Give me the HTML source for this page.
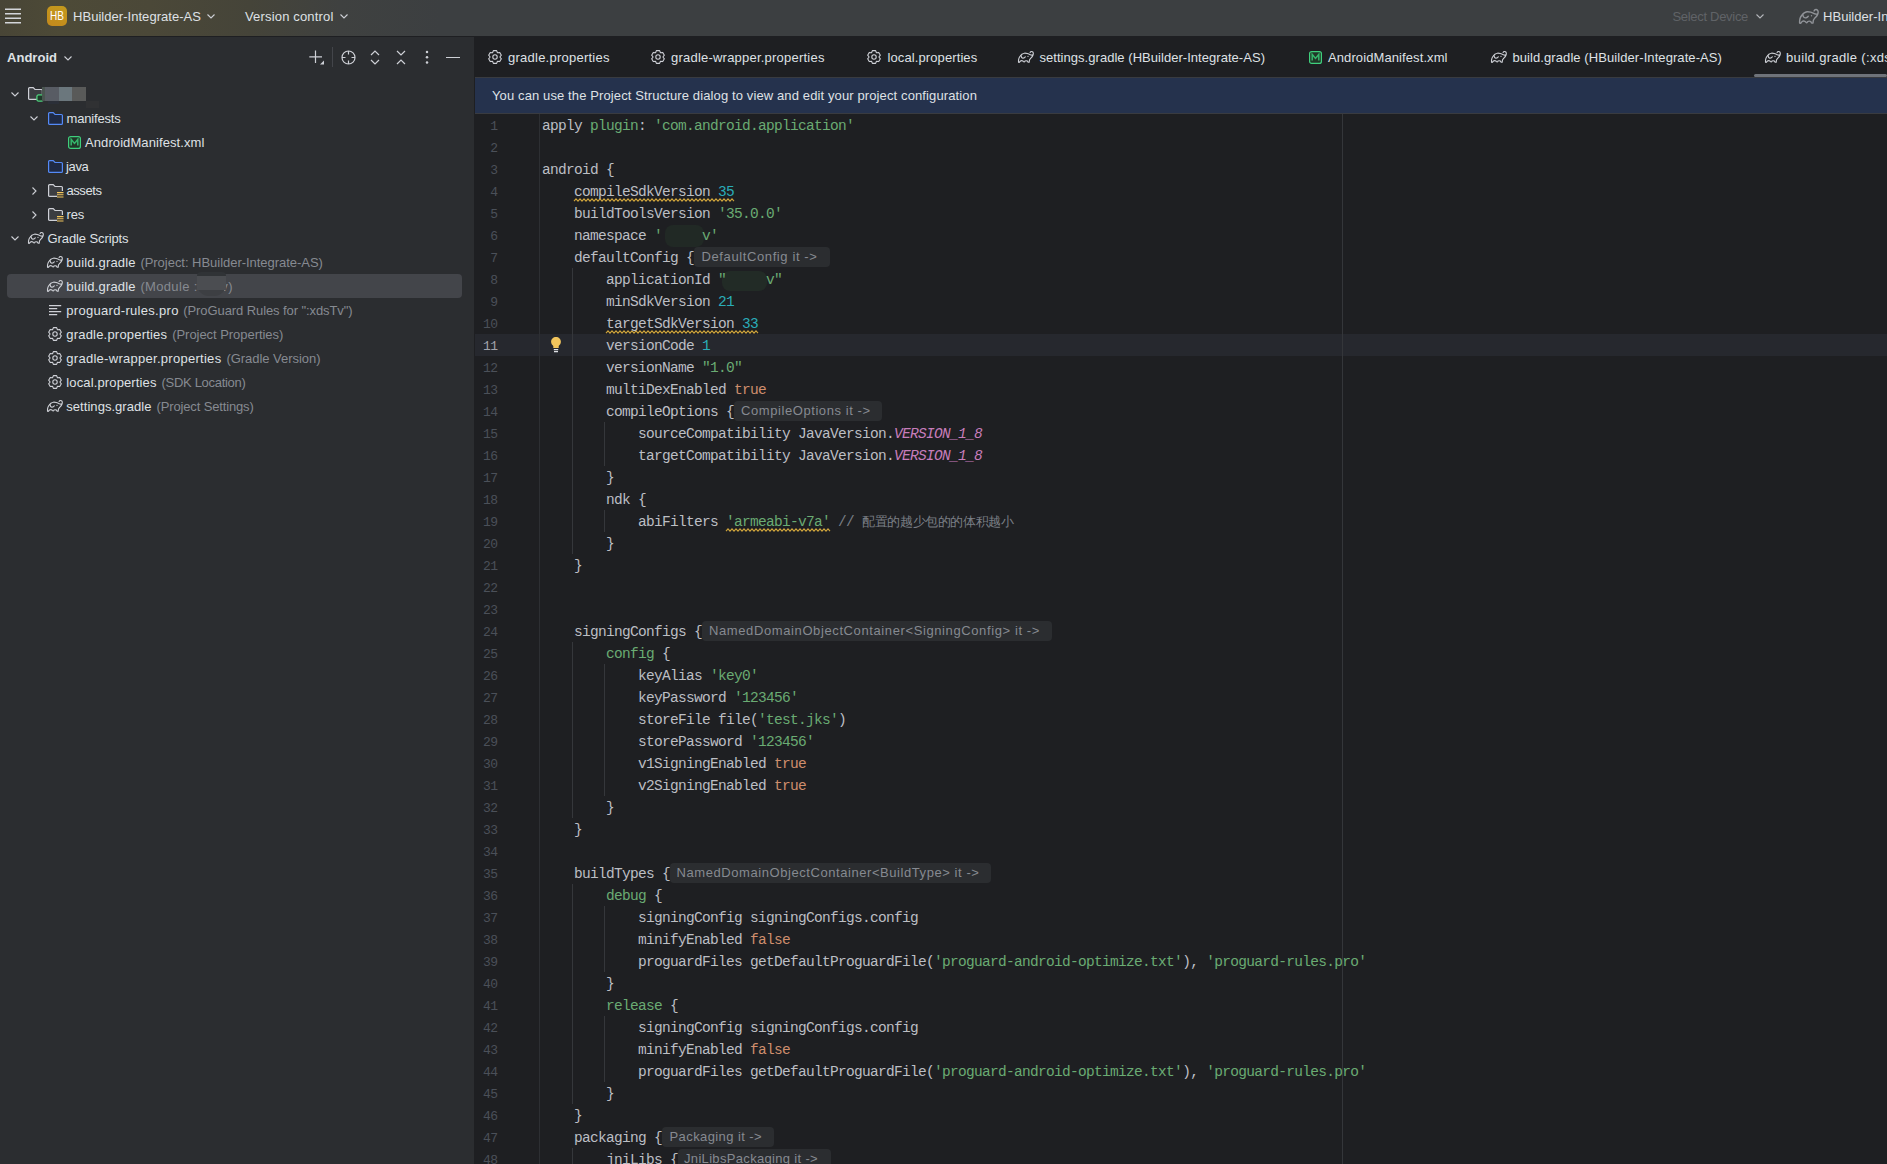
<!DOCTYPE html><html><head><meta charset="utf-8"><style>
*{margin:0;padding:0;box-sizing:border-box}
html,body{width:1887px;height:1164px;overflow:hidden;background:#1e1f22;font-family:"Liberation Sans", sans-serif;}
.abs{position:absolute}
svg{position:absolute;overflow:visible}
#title{left:0;top:0;width:1887px;height:37px;border-bottom:1px solid #1e1f22;background:linear-gradient(90deg,#484536 0px,#4d4a37 60px,#4b4838 150px,#454439 250px,#3f4140 340px,#3c3f41 440px,#3c3f41 100%);}
#side{left:0;top:37px;width:474px;height:1127px;background:#2b2d30;}
#tabs{left:474px;top:37px;width:1413px;height:40px;background:#1e1f22;}
#banner{left:475px;top:77px;width:1412px;height:37px;background:#25324d;border-top:1px solid #393b40;border-bottom:1px solid #393b40;}
#code{left:474px;top:114px;width:1413px;height:1050px;background:#1e1f22;}
.t{position:absolute;white-space:pre;font-size:13px;color:#dfe1e5;line-height:16px;}
.ln{position:absolute;width:23.5px;text-align:right;font-family:"Liberation Mono", monospace;font-size:13px;letter-spacing:-0.5px;color:#4b5059;line-height:22px;}
.cl{position:absolute;white-space:pre;font-family:"Liberation Mono", monospace;font-size:14.5px;letter-spacing:-0.7px;color:#bcbec4;line-height:22px;height:22px;}
.s{color:#6aab73} .n{color:#2aacb8} .k{color:#cf8e6d} .p{color:#c77dbb;font-style:italic}
.cm{color:#7a7e85}
.hint{display:inline-block;vertical-align:top;margin-top:3px;height:20px;line-height:20px;padding:0 0 0 7px;border-radius:4px;background:#2b2d30;color:#868a91;font-family:"Liberation Sans", sans-serif;font-size:13px;}
.guide{position:absolute;width:1px;background:#313438;}
</style></head><body>
<div id="title" class="abs"></div><svg style="left:5px;top:8px" width="17" height="16" viewBox="0 0 17 16"><path d="M0 1.2H16M0 5.7H16M0 10.2H16M0 14.7H16" stroke="#d4d6da" stroke-width="1.4"/></svg><div class="abs" style="left:47px;top:6px;width:20px;height:20px;border-radius:5px;background:linear-gradient(200deg,#c39a1d,#c4891c);"></div><div class="t" style="left:50px;top:8.26px;font-size:12.8px;color:#ffffff;font-weight:normal;letter-spacing:0.000px;transform:scaleX(0.78);transform-origin:0 0;">HB</div><div class="t" style="left:73px;top:8.80px;font-size:13px;color:#dfe1e5;font-weight:normal;letter-spacing:0.040px;">HBuilder-Integrate-AS</div><svg style="left:207px;top:14px" width="8" height="5" viewBox="0 0 8 5"><path d="M0.5 0.5L4 4L7.5 0.5" fill="none" stroke="#ced0d6" stroke-width="1.1"/></svg><div class="t" style="left:245px;top:8.80px;font-size:13px;color:#dfe1e5;font-weight:normal;letter-spacing:0.167px;">Version control</div><svg style="left:340px;top:14px" width="8" height="5" viewBox="0 0 8 5"><path d="M0.5 0.5L4 4L7.5 0.5" fill="none" stroke="#ced0d6" stroke-width="1.1"/></svg><div class="t" style="left:1672.5px;top:8.80px;font-size:13px;color:#606367;font-weight:normal;letter-spacing:-0.306px;">Select Device</div><svg style="left:1756px;top:14px" width="8" height="5" viewBox="0 0 8 5"><path d="M0.5 0.5L4 4L7.5 0.5" fill="none" stroke="#b4b6ba" stroke-width="1.1"/></svg><svg style="left:1799px;top:8.5px" width="20.0" height="15.0" viewBox="0 0 16 12"><path d="M12.10 1.50C12.20 1.37 12.45 0.88 12.70 0.70C12.95 0.52 13.25 0.40 13.60 0.45C13.95 0.50 14.52 0.71 14.80 1.00C15.08 1.29 15.25 1.73 15.30 2.20C15.35 2.67 15.28 3.23 15.10 3.80C14.92 4.37 14.62 5.02 14.20 5.60C13.78 6.18 13.03 6.77 12.60 7.30C12.17 7.83 11.82 8.28 11.60 8.80C11.38 9.32 11.37 10.00 11.30 10.40C11.23 10.80 11.22 11.07 11.20 11.20 M11.20 11.20C11.02 11.20 10.42 11.40 10.10 11.20C9.78 11.00 9.62 10.25 9.30 10.00C8.98 9.75 8.57 9.70 8.20 9.70C7.83 9.70 7.45 9.77 7.10 10.00C6.75 10.23 6.47 11.10 6.10 11.10C5.73 11.10 5.30 10.25 4.90 10.00C4.50 9.75 4.10 9.60 3.70 9.60C3.30 9.60 2.88 9.72 2.50 10.00C2.12 10.28 1.73 11.10 1.40 11.30C1.07 11.50 0.65 11.22 0.50 11.20 M0.50 11.20C0.51 10.87 0.45 9.92 0.55 9.20C0.65 8.48 0.81 7.60 1.10 6.90C1.39 6.20 1.83 5.60 2.30 5.00C2.77 4.40 3.22 3.77 3.90 3.30C4.58 2.83 5.50 2.33 6.40 2.20C7.30 2.07 8.43 2.30 9.30 2.50C10.17 2.70 10.88 3.13 11.60 3.40C12.32 3.67 13.03 4.03 13.60 4.10C14.17 4.17 14.77 3.85 15.00 3.80" fill="none" stroke="#909398" stroke-width="1.15" stroke-linejoin="round" stroke-linecap="round"/><path d="M3.00 4.50C3.10 4.80 3.27 5.87 3.60 6.30C3.93 6.73 4.53 7.03 5.00 7.10C5.47 7.17 6.00 6.92 6.40 6.70C6.80 6.48 7.23 5.95 7.40 5.80" fill="none" stroke="#909398" stroke-width="1.15" stroke-linecap="round"/><circle cx="10" cy="5.4" r="0.55" fill="#909398"/></svg><div class="t" style="left:1823px;top:8.80px;font-size:13px;color:#dfe1e5;font-weight:normal;letter-spacing:0.040px;">HBuilder-Integrate-AS</div><div id="side" class="abs"></div><div class="t" style="left:7px;top:49.50px;font-size:13px;color:#dfe1e5;font-weight:bold;letter-spacing:0.025px;">Android</div><svg style="left:64px;top:56px" width="8" height="5" viewBox="0 0 8 5"><path d="M0.5 0.5L4 4L7.5 0.5" fill="none" stroke="#ced0d6" stroke-width="1.1"/></svg><svg style="left:309px;top:50px" width="16" height="15" viewBox="0 0 16 15"><path d="M6.5 0.5V13M0.3 6.8H13" stroke="#ced0d6" stroke-width="1.2"/><path d="M15 10.5V14.5H11Z" fill="#ced0d6"/></svg><div class="abs" style="left:332px;top:47px;width:1px;height:20px;background:#43454a"></div><svg style="left:341px;top:50px" width="15" height="15" viewBox="0 0 15 15"><circle cx="7.5" cy="7.5" r="6.5" fill="none" stroke="#ced0d6" stroke-width="1.2"/><path d="M7.5 1V4.5M7.5 10.5V14M1 7.5H4.5M10.5 7.5H14" stroke="#ced0d6" stroke-width="1.2"/></svg><svg style="left:370px;top:50px" width="10" height="15" viewBox="0 0 10 15"><path d="M1 5L5 1L9 5M1 10L5 14L9 10" fill="none" stroke="#ced0d6" stroke-width="1.2"/></svg><svg style="left:396px;top:50px" width="10" height="15" viewBox="0 0 10 15"><path d="M1 1L5 5L9 1M1 14L5 10L9 14" fill="none" stroke="#ced0d6" stroke-width="1.2"/></svg><svg style="left:425px;top:50px" width="4" height="15" viewBox="0 0 4 15"><circle cx="2" cy="2" r="1.25" fill="#ced0d6"/><circle cx="2" cy="7.2" r="1.25" fill="#ced0d6"/><circle cx="2" cy="12.4" r="1.25" fill="#ced0d6"/></svg><div class="abs" style="left:446px;top:56.5px;width:14px;height:1.3px;background:#ced0d6"></div><svg style="left:11px;top:92px" width="8" height="5" viewBox="0 0 8 5"><path d="M0.5 0.5L4 4L7.5 0.5" fill="none" stroke="#ced0d6" stroke-width="1.1"/></svg><svg style="left:28px;top:87px" width="15" height="13" viewBox="0 0 15 13"><path d="M9 12.4H1.6Q0.6 12.4 0.6 11.4V1.6Q0.6 0.6 1.6 0.6H5.2L7 2.5H13.4Q14.4 2.5 14.4 3.5V7" fill="#3b3d41" stroke="#ced0d6" stroke-width="1.2"/></svg><svg style="left:36px;top:94px" width="8" height="8" viewBox="0 0 8 8"><rect x="0.9" y="0.9" width="6.2" height="6.2" rx="1.6" fill="#1f3b2a" stroke="#4fd17d" stroke-width="1.3"/></svg><div class="abs" style="left:42px;top:87px;width:3px;height:14px;background:#4a5550"></div><div class="abs" style="left:45px;top:87px;width:14px;height:14px;background:#585c64"></div><div class="abs" style="left:59px;top:87px;width:13px;height:14px;background:#6b777d"></div><div class="abs" style="left:72px;top:87px;width:14px;height:14px;background:#595a59"></div><div class="abs" style="left:86px;top:101px;width:13px;height:7px;background:#303133"></div><div class="abs" style="left:48px;top:101px;width:11px;height:3px;background:#2b2f38"></div><svg style="left:30px;top:116px" width="8" height="5" viewBox="0 0 8 5"><path d="M0.5 0.5L4 4L7.5 0.5" fill="none" stroke="#ced0d6" stroke-width="1.1"/></svg><svg style="left:47.5px;top:111.5px" width="15" height="13" viewBox="0 0 15 13"><path d="M1.6 0.6H5.2L7 2.5H13.4Q14.4 2.5 14.4 3.5V11.4Q14.4 12.4 13.4 12.4H1.6Q0.6 12.4 0.6 11.4V1.6Q0.6 0.6 1.6 0.6Z" fill="#1f2a44" stroke="#548af7" stroke-width="1.2"/></svg><div class="t" style="left:66.5px;top:110.50px;font-size:13px;color:#dfe1e5;font-weight:normal;letter-spacing:-0.181px;">manifests</div><svg style="left:67.5px;top:135.5px" width="13" height="13" viewBox="0 0 13 13"><rect x="0.6" y="0.6" width="11.8" height="11.8" rx="2" fill="#213628" stroke="#3fcf7c" stroke-width="1.2"/><path d="M3.2 9.6V3.4L6.5 7.4L9.8 3.4V9.6" fill="none" stroke="#35b56b" stroke-width="1.5"/></svg><div class="t" style="left:85px;top:134.50px;font-size:13px;color:#dfe1e5;font-weight:normal;letter-spacing:0.091px;">AndroidManifest.xml</div><svg style="left:47.5px;top:159.5px" width="15" height="13" viewBox="0 0 15 13"><path d="M1.6 0.6H5.2L7 2.5H13.4Q14.4 2.5 14.4 3.5V11.4Q14.4 12.4 13.4 12.4H1.6Q0.6 12.4 0.6 11.4V1.6Q0.6 0.6 1.6 0.6Z" fill="#1f2a44" stroke="#548af7" stroke-width="1.2"/></svg><div class="t" style="left:66px;top:158.50px;font-size:13px;color:#dfe1e5;font-weight:normal;letter-spacing:-0.362px;">java</div><svg style="left:31.5px;top:186.5px" width="5" height="8" viewBox="0 0 5 8"><path d="M0.5 0.5L4 4L0.5 7.5" fill="none" stroke="#ced0d6" stroke-width="1.1"/></svg><svg style="left:47.5px;top:183.5px" width="15" height="13" viewBox="0 0 15 13"><path d="M9 12.4H1.6Q0.6 12.4 0.6 11.4V1.6Q0.6 0.6 1.6 0.6H5.2L7 2.5H13.4Q14.4 2.5 14.4 3.5V7" fill="#3b3d41" stroke="#ced0d6" stroke-width="1.2"/></svg><svg style="left:56.5px;top:191.5px" width="7" height="6" viewBox="0 0 7 6"><path d="M0 0.6H6.5M0 2.8H6.5M0 5H6.5" stroke="#f2c55c" stroke-width="1.1"/></svg><div class="t" style="left:66.5px;top:182.50px;font-size:13px;color:#dfe1e5;font-weight:normal;letter-spacing:-0.429px;">assets</div><svg style="left:31.5px;top:210.5px" width="5" height="8" viewBox="0 0 5 8"><path d="M0.5 0.5L4 4L0.5 7.5" fill="none" stroke="#ced0d6" stroke-width="1.1"/></svg><svg style="left:47.5px;top:207.5px" width="15" height="13" viewBox="0 0 15 13"><path d="M9 12.4H1.6Q0.6 12.4 0.6 11.4V1.6Q0.6 0.6 1.6 0.6H5.2L7 2.5H13.4Q14.4 2.5 14.4 3.5V7" fill="#3b3d41" stroke="#ced0d6" stroke-width="1.2"/></svg><svg style="left:56.5px;top:215.5px" width="7" height="6" viewBox="0 0 7 6"><path d="M0 0.6H6.5M0 2.8H6.5M0 5H6.5" stroke="#f2c55c" stroke-width="1.1"/></svg><div class="t" style="left:66.5px;top:206.50px;font-size:13px;color:#dfe1e5;font-weight:normal;letter-spacing:-0.186px;">res</div><svg style="left:11px;top:236px" width="8" height="5" viewBox="0 0 8 5"><path d="M0.5 0.5L4 4L7.5 0.5" fill="none" stroke="#ced0d6" stroke-width="1.1"/></svg><svg style="left:28px;top:231.5px" width="16.0" height="12.0" viewBox="0 0 16 12"><path d="M12.10 1.50C12.20 1.37 12.45 0.88 12.70 0.70C12.95 0.52 13.25 0.40 13.60 0.45C13.95 0.50 14.52 0.71 14.80 1.00C15.08 1.29 15.25 1.73 15.30 2.20C15.35 2.67 15.28 3.23 15.10 3.80C14.92 4.37 14.62 5.02 14.20 5.60C13.78 6.18 13.03 6.77 12.60 7.30C12.17 7.83 11.82 8.28 11.60 8.80C11.38 9.32 11.37 10.00 11.30 10.40C11.23 10.80 11.22 11.07 11.20 11.20 M11.20 11.20C11.02 11.20 10.42 11.40 10.10 11.20C9.78 11.00 9.62 10.25 9.30 10.00C8.98 9.75 8.57 9.70 8.20 9.70C7.83 9.70 7.45 9.77 7.10 10.00C6.75 10.23 6.47 11.10 6.10 11.10C5.73 11.10 5.30 10.25 4.90 10.00C4.50 9.75 4.10 9.60 3.70 9.60C3.30 9.60 2.88 9.72 2.50 10.00C2.12 10.28 1.73 11.10 1.40 11.30C1.07 11.50 0.65 11.22 0.50 11.20 M0.50 11.20C0.51 10.87 0.45 9.92 0.55 9.20C0.65 8.48 0.81 7.60 1.10 6.90C1.39 6.20 1.83 5.60 2.30 5.00C2.77 4.40 3.22 3.77 3.90 3.30C4.58 2.83 5.50 2.33 6.40 2.20C7.30 2.07 8.43 2.30 9.30 2.50C10.17 2.70 10.88 3.13 11.60 3.40C12.32 3.67 13.03 4.03 13.60 4.10C14.17 4.17 14.77 3.85 15.00 3.80" fill="none" stroke="#ced0d6" stroke-width="1.1" stroke-linejoin="round" stroke-linecap="round"/><path d="M3.00 4.50C3.10 4.80 3.27 5.87 3.60 6.30C3.93 6.73 4.53 7.03 5.00 7.10C5.47 7.17 6.00 6.92 6.40 6.70C6.80 6.48 7.23 5.95 7.40 5.80" fill="none" stroke="#ced0d6" stroke-width="1.1" stroke-linecap="round"/><circle cx="10" cy="5.4" r="0.55" fill="#ced0d6"/></svg><div class="t" style="left:47.5px;top:230.50px;font-size:13px;color:#dfe1e5;font-weight:normal;letter-spacing:-0.097px;">Gradle Scripts</div><div class="abs" style="left:7px;top:274px;width:455px;height:24px;border-radius:4px;background:#43454a"></div><svg style="left:47px;top:256px" width="16.0" height="12.0" viewBox="0 0 16 12"><path d="M12.10 1.50C12.20 1.37 12.45 0.88 12.70 0.70C12.95 0.52 13.25 0.40 13.60 0.45C13.95 0.50 14.52 0.71 14.80 1.00C15.08 1.29 15.25 1.73 15.30 2.20C15.35 2.67 15.28 3.23 15.10 3.80C14.92 4.37 14.62 5.02 14.20 5.60C13.78 6.18 13.03 6.77 12.60 7.30C12.17 7.83 11.82 8.28 11.60 8.80C11.38 9.32 11.37 10.00 11.30 10.40C11.23 10.80 11.22 11.07 11.20 11.20 M11.20 11.20C11.02 11.20 10.42 11.40 10.10 11.20C9.78 11.00 9.62 10.25 9.30 10.00C8.98 9.75 8.57 9.70 8.20 9.70C7.83 9.70 7.45 9.77 7.10 10.00C6.75 10.23 6.47 11.10 6.10 11.10C5.73 11.10 5.30 10.25 4.90 10.00C4.50 9.75 4.10 9.60 3.70 9.60C3.30 9.60 2.88 9.72 2.50 10.00C2.12 10.28 1.73 11.10 1.40 11.30C1.07 11.50 0.65 11.22 0.50 11.20 M0.50 11.20C0.51 10.87 0.45 9.92 0.55 9.20C0.65 8.48 0.81 7.60 1.10 6.90C1.39 6.20 1.83 5.60 2.30 5.00C2.77 4.40 3.22 3.77 3.90 3.30C4.58 2.83 5.50 2.33 6.40 2.20C7.30 2.07 8.43 2.30 9.30 2.50C10.17 2.70 10.88 3.13 11.60 3.40C12.32 3.67 13.03 4.03 13.60 4.10C14.17 4.17 14.77 3.85 15.00 3.80" fill="none" stroke="#ced0d6" stroke-width="1.1" stroke-linejoin="round" stroke-linecap="round"/><path d="M3.00 4.50C3.10 4.80 3.27 5.87 3.60 6.30C3.93 6.73 4.53 7.03 5.00 7.10C5.47 7.17 6.00 6.92 6.40 6.70C6.80 6.48 7.23 5.95 7.40 5.80" fill="none" stroke="#ced0d6" stroke-width="1.1" stroke-linecap="round"/><circle cx="10" cy="5.4" r="0.55" fill="#ced0d6"/></svg><div class="t" style="left:66.3px;top:254.50px;font-size:13px;color:#dfe1e5;font-weight:normal;letter-spacing:0.190px;">build.gradle</div><div class="t" style="left:140.4px;top:254.50px;font-size:13px;color:#868a91;font-weight:normal;letter-spacing:-0.032px;">(Project: HBuilder-Integrate-AS)</div><svg style="left:47px;top:280px" width="16.0" height="12.0" viewBox="0 0 16 12"><path d="M12.10 1.50C12.20 1.37 12.45 0.88 12.70 0.70C12.95 0.52 13.25 0.40 13.60 0.45C13.95 0.50 14.52 0.71 14.80 1.00C15.08 1.29 15.25 1.73 15.30 2.20C15.35 2.67 15.28 3.23 15.10 3.80C14.92 4.37 14.62 5.02 14.20 5.60C13.78 6.18 13.03 6.77 12.60 7.30C12.17 7.83 11.82 8.28 11.60 8.80C11.38 9.32 11.37 10.00 11.30 10.40C11.23 10.80 11.22 11.07 11.20 11.20 M11.20 11.20C11.02 11.20 10.42 11.40 10.10 11.20C9.78 11.00 9.62 10.25 9.30 10.00C8.98 9.75 8.57 9.70 8.20 9.70C7.83 9.70 7.45 9.77 7.10 10.00C6.75 10.23 6.47 11.10 6.10 11.10C5.73 11.10 5.30 10.25 4.90 10.00C4.50 9.75 4.10 9.60 3.70 9.60C3.30 9.60 2.88 9.72 2.50 10.00C2.12 10.28 1.73 11.10 1.40 11.30C1.07 11.50 0.65 11.22 0.50 11.20 M0.50 11.20C0.51 10.87 0.45 9.92 0.55 9.20C0.65 8.48 0.81 7.60 1.10 6.90C1.39 6.20 1.83 5.60 2.30 5.00C2.77 4.40 3.22 3.77 3.90 3.30C4.58 2.83 5.50 2.33 6.40 2.20C7.30 2.07 8.43 2.30 9.30 2.50C10.17 2.70 10.88 3.13 11.60 3.40C12.32 3.67 13.03 4.03 13.60 4.10C14.17 4.17 14.77 3.85 15.00 3.80" fill="none" stroke="#ced0d6" stroke-width="1.1" stroke-linejoin="round" stroke-linecap="round"/><path d="M3.00 4.50C3.10 4.80 3.27 5.87 3.60 6.30C3.93 6.73 4.53 7.03 5.00 7.10C5.47 7.17 6.00 6.92 6.40 6.70C6.80 6.48 7.23 5.95 7.40 5.80" fill="none" stroke="#ced0d6" stroke-width="1.1" stroke-linecap="round"/><circle cx="10" cy="5.4" r="0.55" fill="#ced0d6"/></svg><div class="t" style="left:66.3px;top:278.50px;font-size:13px;color:#dfe1e5;font-weight:normal;letter-spacing:0.190px;">build.gradle</div><div class="t" style="left:140.4px;top:278.50px;font-size:13px;color:#868a91;font-weight:normal;letter-spacing:0.336px;">(Module :      v)</div><svg style="left:48.5px;top:304.5px" width="13" height="11" viewBox="0 0 13 11"><path d="M0 0.6H12.2M0 3.6H8.2M0 6.6H12.2M0 9.6H8.2" stroke="#ced0d6" stroke-width="1.2"/></svg><div class="t" style="left:66.3px;top:302.50px;font-size:13px;color:#dfe1e5;font-weight:normal;letter-spacing:0.303px;">proguard-rules.pro</div><div class="t" style="left:183.3px;top:302.50px;font-size:13px;color:#868a91;font-weight:normal;letter-spacing:-0.089px;">(ProGuard Rules for ":xdsTv")</div><svg style="left:48px;top:326.5px" width="14" height="14" viewBox="0 0 14 14"><path d="M5.40 0.60L8.60 0.60L9.45 2.76L11.75 2.42L13.34 5.18L11.90 7.00L13.34 8.82L11.75 11.58L9.45 11.24L8.60 13.40L5.40 13.40L4.55 11.24L2.25 11.58L0.66 8.82L2.10 7.00L0.66 5.18L2.25 2.42L4.55 2.76Z" fill="none" stroke="#ced0d6" stroke-width="1.1" stroke-linejoin="round"/><circle cx="7" cy="7" r="2.2" fill="none" stroke="#ced0d6" stroke-width="1.1"/></svg><div class="t" style="left:66.3px;top:326.50px;font-size:13px;color:#dfe1e5;font-weight:normal;letter-spacing:0.197px;">gradle.properties</div><div class="t" style="left:172.2px;top:326.50px;font-size:13px;color:#868a91;font-weight:normal;letter-spacing:-0.044px;">(Project Properties)</div><svg style="left:48px;top:350.5px" width="14" height="14" viewBox="0 0 14 14"><path d="M5.40 0.60L8.60 0.60L9.45 2.76L11.75 2.42L13.34 5.18L11.90 7.00L13.34 8.82L11.75 11.58L9.45 11.24L8.60 13.40L5.40 13.40L4.55 11.24L2.25 11.58L0.66 8.82L2.10 7.00L0.66 5.18L2.25 2.42L4.55 2.76Z" fill="none" stroke="#ced0d6" stroke-width="1.1" stroke-linejoin="round"/><circle cx="7" cy="7" r="2.2" fill="none" stroke="#ced0d6" stroke-width="1.1"/></svg><div class="t" style="left:66.3px;top:350.50px;font-size:13px;color:#dfe1e5;font-weight:normal;letter-spacing:0.279px;">gradle-wrapper.properties</div><div class="t" style="left:226.4px;top:350.50px;font-size:13px;color:#868a91;font-weight:normal;letter-spacing:-0.034px;">(Gradle Version)</div><svg style="left:48px;top:374.5px" width="14" height="14" viewBox="0 0 14 14"><path d="M5.40 0.60L8.60 0.60L9.45 2.76L11.75 2.42L13.34 5.18L11.90 7.00L13.34 8.82L11.75 11.58L9.45 11.24L8.60 13.40L5.40 13.40L4.55 11.24L2.25 11.58L0.66 8.82L2.10 7.00L0.66 5.18L2.25 2.42L4.55 2.76Z" fill="none" stroke="#ced0d6" stroke-width="1.1" stroke-linejoin="round"/><circle cx="7" cy="7" r="2.2" fill="none" stroke="#ced0d6" stroke-width="1.1"/></svg><div class="t" style="left:66.3px;top:374.50px;font-size:13px;color:#dfe1e5;font-weight:normal;letter-spacing:0.134px;">local.properties</div><div class="t" style="left:161.5px;top:374.50px;font-size:13px;color:#868a91;font-weight:normal;letter-spacing:-0.296px;">(SDK Location)</div><svg style="left:47px;top:400px" width="16.0" height="12.0" viewBox="0 0 16 12"><path d="M12.10 1.50C12.20 1.37 12.45 0.88 12.70 0.70C12.95 0.52 13.25 0.40 13.60 0.45C13.95 0.50 14.52 0.71 14.80 1.00C15.08 1.29 15.25 1.73 15.30 2.20C15.35 2.67 15.28 3.23 15.10 3.80C14.92 4.37 14.62 5.02 14.20 5.60C13.78 6.18 13.03 6.77 12.60 7.30C12.17 7.83 11.82 8.28 11.60 8.80C11.38 9.32 11.37 10.00 11.30 10.40C11.23 10.80 11.22 11.07 11.20 11.20 M11.20 11.20C11.02 11.20 10.42 11.40 10.10 11.20C9.78 11.00 9.62 10.25 9.30 10.00C8.98 9.75 8.57 9.70 8.20 9.70C7.83 9.70 7.45 9.77 7.10 10.00C6.75 10.23 6.47 11.10 6.10 11.10C5.73 11.10 5.30 10.25 4.90 10.00C4.50 9.75 4.10 9.60 3.70 9.60C3.30 9.60 2.88 9.72 2.50 10.00C2.12 10.28 1.73 11.10 1.40 11.30C1.07 11.50 0.65 11.22 0.50 11.20 M0.50 11.20C0.51 10.87 0.45 9.92 0.55 9.20C0.65 8.48 0.81 7.60 1.10 6.90C1.39 6.20 1.83 5.60 2.30 5.00C2.77 4.40 3.22 3.77 3.90 3.30C4.58 2.83 5.50 2.33 6.40 2.20C7.30 2.07 8.43 2.30 9.30 2.50C10.17 2.70 10.88 3.13 11.60 3.40C12.32 3.67 13.03 4.03 13.60 4.10C14.17 4.17 14.77 3.85 15.00 3.80" fill="none" stroke="#ced0d6" stroke-width="1.1" stroke-linejoin="round" stroke-linecap="round"/><path d="M3.00 4.50C3.10 4.80 3.27 5.87 3.60 6.30C3.93 6.73 4.53 7.03 5.00 7.10C5.47 7.17 6.00 6.92 6.40 6.70C6.80 6.48 7.23 5.95 7.40 5.80" fill="none" stroke="#ced0d6" stroke-width="1.1" stroke-linecap="round"/><circle cx="10" cy="5.4" r="0.55" fill="#ced0d6"/></svg><div class="t" style="left:66.3px;top:398.50px;font-size:13px;color:#dfe1e5;font-weight:normal;letter-spacing:0.043px;">settings.gradle</div><div class="t" style="left:156.6px;top:398.50px;font-size:13px;color:#868a91;font-weight:normal;letter-spacing:-0.150px;">(Project Settings)</div><div class="abs" style="left:197px;top:272px;width:29px;height:24px;border-radius:12px;background:#3d3f43"></div><div class="abs" style="left:197px;top:272px;width:29px;height:4px;border-radius:12px 12px 0 0;background:#303336"></div><div class="abs" style="left:197px;top:276px;width:29px;height:14px;background:#4b4d51"></div><div id="tabs" class="abs"></div><svg style="left:488px;top:50px" width="14" height="14" viewBox="0 0 14 14"><path d="M5.40 0.60L8.60 0.60L9.45 2.76L11.75 2.42L13.34 5.18L11.90 7.00L13.34 8.82L11.75 11.58L9.45 11.24L8.60 13.40L5.40 13.40L4.55 11.24L2.25 11.58L0.66 8.82L2.10 7.00L0.66 5.18L2.25 2.42L4.55 2.76Z" fill="none" stroke="#ced0d6" stroke-width="1.1" stroke-linejoin="round"/><circle cx="7" cy="7" r="2.2" fill="none" stroke="#ced0d6" stroke-width="1.1"/></svg><div class="t" style="left:508px;top:49.50px;font-size:13px;color:#dfe1e5;font-weight:normal;letter-spacing:0.244px;">gradle.properties</div><svg style="left:651px;top:50px" width="14" height="14" viewBox="0 0 14 14"><path d="M5.40 0.60L8.60 0.60L9.45 2.76L11.75 2.42L13.34 5.18L11.90 7.00L13.34 8.82L11.75 11.58L9.45 11.24L8.60 13.40L5.40 13.40L4.55 11.24L2.25 11.58L0.66 8.82L2.10 7.00L0.66 5.18L2.25 2.42L4.55 2.76Z" fill="none" stroke="#ced0d6" stroke-width="1.1" stroke-linejoin="round"/><circle cx="7" cy="7" r="2.2" fill="none" stroke="#ced0d6" stroke-width="1.1"/></svg><div class="t" style="left:671px;top:49.50px;font-size:13px;color:#dfe1e5;font-weight:normal;letter-spacing:0.219px;">gradle-wrapper.properties</div><svg style="left:867px;top:50px" width="14" height="14" viewBox="0 0 14 14"><path d="M5.40 0.60L8.60 0.60L9.45 2.76L11.75 2.42L13.34 5.18L11.90 7.00L13.34 8.82L11.75 11.58L9.45 11.24L8.60 13.40L5.40 13.40L4.55 11.24L2.25 11.58L0.66 8.82L2.10 7.00L0.66 5.18L2.25 2.42L4.55 2.76Z" fill="none" stroke="#ced0d6" stroke-width="1.1" stroke-linejoin="round"/><circle cx="7" cy="7" r="2.2" fill="none" stroke="#ced0d6" stroke-width="1.1"/></svg><div class="t" style="left:887.5px;top:49.50px;font-size:13px;color:#dfe1e5;font-weight:normal;letter-spacing:0.103px;">local.properties</div><svg style="left:1018px;top:51px" width="16.0" height="12.0" viewBox="0 0 16 12"><path d="M12.10 1.50C12.20 1.37 12.45 0.88 12.70 0.70C12.95 0.52 13.25 0.40 13.60 0.45C13.95 0.50 14.52 0.71 14.80 1.00C15.08 1.29 15.25 1.73 15.30 2.20C15.35 2.67 15.28 3.23 15.10 3.80C14.92 4.37 14.62 5.02 14.20 5.60C13.78 6.18 13.03 6.77 12.60 7.30C12.17 7.83 11.82 8.28 11.60 8.80C11.38 9.32 11.37 10.00 11.30 10.40C11.23 10.80 11.22 11.07 11.20 11.20 M11.20 11.20C11.02 11.20 10.42 11.40 10.10 11.20C9.78 11.00 9.62 10.25 9.30 10.00C8.98 9.75 8.57 9.70 8.20 9.70C7.83 9.70 7.45 9.77 7.10 10.00C6.75 10.23 6.47 11.10 6.10 11.10C5.73 11.10 5.30 10.25 4.90 10.00C4.50 9.75 4.10 9.60 3.70 9.60C3.30 9.60 2.88 9.72 2.50 10.00C2.12 10.28 1.73 11.10 1.40 11.30C1.07 11.50 0.65 11.22 0.50 11.20 M0.50 11.20C0.51 10.87 0.45 9.92 0.55 9.20C0.65 8.48 0.81 7.60 1.10 6.90C1.39 6.20 1.83 5.60 2.30 5.00C2.77 4.40 3.22 3.77 3.90 3.30C4.58 2.83 5.50 2.33 6.40 2.20C7.30 2.07 8.43 2.30 9.30 2.50C10.17 2.70 10.88 3.13 11.60 3.40C12.32 3.67 13.03 4.03 13.60 4.10C14.17 4.17 14.77 3.85 15.00 3.80" fill="none" stroke="#ced0d6" stroke-width="1.1" stroke-linejoin="round" stroke-linecap="round"/><path d="M3.00 4.50C3.10 4.80 3.27 5.87 3.60 6.30C3.93 6.73 4.53 7.03 5.00 7.10C5.47 7.17 6.00 6.92 6.40 6.70C6.80 6.48 7.23 5.95 7.40 5.80" fill="none" stroke="#ced0d6" stroke-width="1.1" stroke-linecap="round"/><circle cx="10" cy="5.4" r="0.55" fill="#ced0d6"/></svg><div class="t" style="left:1039.5px;top:49.50px;font-size:13px;color:#dfe1e5;font-weight:normal;letter-spacing:0.039px;">settings.gradle (HBuilder-Integrate-AS)</div><svg style="left:1309px;top:50.5px" width="13" height="13" viewBox="0 0 13 13"><rect x="0.6" y="0.6" width="11.8" height="11.8" rx="2" fill="#213628" stroke="#3fcf7c" stroke-width="1.2"/><path d="M3.2 9.6V3.4L6.5 7.4L9.8 3.4V9.6" fill="none" stroke="#35b56b" stroke-width="1.5"/></svg><div class="t" style="left:1328px;top:49.50px;font-size:13px;color:#dfe1e5;font-weight:normal;letter-spacing:0.096px;">AndroidManifest.xml</div><svg style="left:1491px;top:51px" width="16.0" height="12.0" viewBox="0 0 16 12"><path d="M12.10 1.50C12.20 1.37 12.45 0.88 12.70 0.70C12.95 0.52 13.25 0.40 13.60 0.45C13.95 0.50 14.52 0.71 14.80 1.00C15.08 1.29 15.25 1.73 15.30 2.20C15.35 2.67 15.28 3.23 15.10 3.80C14.92 4.37 14.62 5.02 14.20 5.60C13.78 6.18 13.03 6.77 12.60 7.30C12.17 7.83 11.82 8.28 11.60 8.80C11.38 9.32 11.37 10.00 11.30 10.40C11.23 10.80 11.22 11.07 11.20 11.20 M11.20 11.20C11.02 11.20 10.42 11.40 10.10 11.20C9.78 11.00 9.62 10.25 9.30 10.00C8.98 9.75 8.57 9.70 8.20 9.70C7.83 9.70 7.45 9.77 7.10 10.00C6.75 10.23 6.47 11.10 6.10 11.10C5.73 11.10 5.30 10.25 4.90 10.00C4.50 9.75 4.10 9.60 3.70 9.60C3.30 9.60 2.88 9.72 2.50 10.00C2.12 10.28 1.73 11.10 1.40 11.30C1.07 11.50 0.65 11.22 0.50 11.20 M0.50 11.20C0.51 10.87 0.45 9.92 0.55 9.20C0.65 8.48 0.81 7.60 1.10 6.90C1.39 6.20 1.83 5.60 2.30 5.00C2.77 4.40 3.22 3.77 3.90 3.30C4.58 2.83 5.50 2.33 6.40 2.20C7.30 2.07 8.43 2.30 9.30 2.50C10.17 2.70 10.88 3.13 11.60 3.40C12.32 3.67 13.03 4.03 13.60 4.10C14.17 4.17 14.77 3.85 15.00 3.80" fill="none" stroke="#ced0d6" stroke-width="1.1" stroke-linejoin="round" stroke-linecap="round"/><path d="M3.00 4.50C3.10 4.80 3.27 5.87 3.60 6.30C3.93 6.73 4.53 7.03 5.00 7.10C5.47 7.17 6.00 6.92 6.40 6.70C6.80 6.48 7.23 5.95 7.40 5.80" fill="none" stroke="#ced0d6" stroke-width="1.1" stroke-linecap="round"/><circle cx="10" cy="5.4" r="0.55" fill="#ced0d6"/></svg><div class="t" style="left:1512.5px;top:49.50px;font-size:13px;color:#dfe1e5;font-weight:normal;letter-spacing:0.079px;">build.gradle (HBuilder-Integrate-AS)</div><svg style="left:1765px;top:51px" width="16.0" height="12.0" viewBox="0 0 16 12"><path d="M12.10 1.50C12.20 1.37 12.45 0.88 12.70 0.70C12.95 0.52 13.25 0.40 13.60 0.45C13.95 0.50 14.52 0.71 14.80 1.00C15.08 1.29 15.25 1.73 15.30 2.20C15.35 2.67 15.28 3.23 15.10 3.80C14.92 4.37 14.62 5.02 14.20 5.60C13.78 6.18 13.03 6.77 12.60 7.30C12.17 7.83 11.82 8.28 11.60 8.80C11.38 9.32 11.37 10.00 11.30 10.40C11.23 10.80 11.22 11.07 11.20 11.20 M11.20 11.20C11.02 11.20 10.42 11.40 10.10 11.20C9.78 11.00 9.62 10.25 9.30 10.00C8.98 9.75 8.57 9.70 8.20 9.70C7.83 9.70 7.45 9.77 7.10 10.00C6.75 10.23 6.47 11.10 6.10 11.10C5.73 11.10 5.30 10.25 4.90 10.00C4.50 9.75 4.10 9.60 3.70 9.60C3.30 9.60 2.88 9.72 2.50 10.00C2.12 10.28 1.73 11.10 1.40 11.30C1.07 11.50 0.65 11.22 0.50 11.20 M0.50 11.20C0.51 10.87 0.45 9.92 0.55 9.20C0.65 8.48 0.81 7.60 1.10 6.90C1.39 6.20 1.83 5.60 2.30 5.00C2.77 4.40 3.22 3.77 3.90 3.30C4.58 2.83 5.50 2.33 6.40 2.20C7.30 2.07 8.43 2.30 9.30 2.50C10.17 2.70 10.88 3.13 11.60 3.40C12.32 3.67 13.03 4.03 13.60 4.10C14.17 4.17 14.77 3.85 15.00 3.80" fill="none" stroke="#ced0d6" stroke-width="1.1" stroke-linejoin="round" stroke-linecap="round"/><path d="M3.00 4.50C3.10 4.80 3.27 5.87 3.60 6.30C3.93 6.73 4.53 7.03 5.00 7.10C5.47 7.17 6.00 6.92 6.40 6.70C6.80 6.48 7.23 5.95 7.40 5.80" fill="none" stroke="#ced0d6" stroke-width="1.1" stroke-linecap="round"/><circle cx="10" cy="5.4" r="0.55" fill="#ced0d6"/></svg><div class="t" style="left:1786px;top:49.50px;font-size:13px;color:#dfe1e5;font-weight:normal;letter-spacing:0.344px;">build.gradle (:xdsTv)</div><div class="abs" style="left:824.5px;top:45px;width:10px;height:25px;background:#1e1f22"></div><div class="abs" style="left:1754px;top:74px;width:133px;height:3px;border-radius:1.5px;background:#6f737a"></div><div id="banner" class="abs"></div><div class="t" style="left:492px;top:87.80px;font-size:13px;color:#dfe1e5;font-weight:normal;letter-spacing:0.119px;">You can use the Project Structure dialog to view and edit your project configuration</div><div id="code" class="abs"></div><div class="abs" style="left:475px;top:334px;width:1412px;height:22px;background:#26282e"></div><div class="abs" style="left:539px;top:114px;width:1px;height:1050px;background:#2d2f33"></div><div class="abs" style="left:1342px;top:114px;width:1px;height:1050px;background:#34363a"></div><div class="abs" style="left:572px;top:268px;width:1px;height:286px;background:#35373b"></div><div class="abs" style="left:604px;top:422px;width:1px;height:44px;background:#35373b"></div><div class="abs" style="left:604px;top:510px;width:1px;height:22px;background:#35373b"></div><div class="abs" style="left:572px;top:642px;width:1px;height:176px;background:#35373b"></div><div class="abs" style="left:604px;top:664px;width:1px;height:132px;background:#35373b"></div><div class="abs" style="left:572px;top:884px;width:1px;height:220px;background:#35373b"></div><div class="abs" style="left:604px;top:906px;width:1px;height:66px;background:#35373b"></div><div class="abs" style="left:604px;top:1016px;width:1px;height:66px;background:#35373b"></div><div class="abs" style="left:572px;top:1148px;width:1px;height:22px;background:#35373b"></div><div class="abs" style="left:665px;top:225px;width:39px;height:22px;border-radius:8px;background:#212925"></div><div class="abs" style="left:722px;top:271px;width:45px;height:20px;border-radius:8px;background:#222b26"></div><svg style="left:574px;top:198px" width="160" height="4" viewBox="0 0 160 4"><polyline points="0,3.2 2,0.8 4,3.2 6,0.8 8,3.2 10,0.8 12,3.2 14,0.8 16,3.2 18,0.8 20,3.2 22,0.8 24,3.2 26,0.8 28,3.2 30,0.8 32,3.2 34,0.8 36,3.2 38,0.8 40,3.2 42,0.8 44,3.2 46,0.8 48,3.2 50,0.8 52,3.2 54,0.8 56,3.2 58,0.8 60,3.2 62,0.8 64,3.2 66,0.8 68,3.2 70,0.8 72,3.2 74,0.8 76,3.2 78,0.8 80,3.2 82,0.8 84,3.2 86,0.8 88,3.2 90,0.8 92,3.2 94,0.8 96,3.2 98,0.8 100,3.2 102,0.8 104,3.2 106,0.8 108,3.2 110,0.8 112,3.2 114,0.8 116,3.2 118,0.8 120,3.2 122,0.8 124,3.2 126,0.8 128,3.2 130,0.8 132,3.2 134,0.8 136,3.2 138,0.8 140,3.2 142,0.8 144,3.2 146,0.8 148,3.2 150,0.8 152,3.2 154,0.8 156,3.2 158,0.8 160,3.2" fill="none" stroke="#d0a53c" stroke-width="1.1"/></svg><svg style="left:606px;top:330px" width="152" height="4" viewBox="0 0 152 4"><polyline points="0,3.2 2,0.8 4,3.2 6,0.8 8,3.2 10,0.8 12,3.2 14,0.8 16,3.2 18,0.8 20,3.2 22,0.8 24,3.2 26,0.8 28,3.2 30,0.8 32,3.2 34,0.8 36,3.2 38,0.8 40,3.2 42,0.8 44,3.2 46,0.8 48,3.2 50,0.8 52,3.2 54,0.8 56,3.2 58,0.8 60,3.2 62,0.8 64,3.2 66,0.8 68,3.2 70,0.8 72,3.2 74,0.8 76,3.2 78,0.8 80,3.2 82,0.8 84,3.2 86,0.8 88,3.2 90,0.8 92,3.2 94,0.8 96,3.2 98,0.8 100,3.2 102,0.8 104,3.2 106,0.8 108,3.2 110,0.8 112,3.2 114,0.8 116,3.2 118,0.8 120,3.2 122,0.8 124,3.2 126,0.8 128,3.2 130,0.8 132,3.2 134,0.8 136,3.2 138,0.8 140,3.2 142,0.8 144,3.2 146,0.8 148,3.2 150,0.8 152,3.2" fill="none" stroke="#d0a53c" stroke-width="1.1"/></svg><svg style="left:726px;top:528px" width="104" height="4" viewBox="0 0 104 4"><polyline points="0,3.2 2,0.8 4,3.2 6,0.8 8,3.2 10,0.8 12,3.2 14,0.8 16,3.2 18,0.8 20,3.2 22,0.8 24,3.2 26,0.8 28,3.2 30,0.8 32,3.2 34,0.8 36,3.2 38,0.8 40,3.2 42,0.8 44,3.2 46,0.8 48,3.2 50,0.8 52,3.2 54,0.8 56,3.2 58,0.8 60,3.2 62,0.8 64,3.2 66,0.8 68,3.2 70,0.8 72,3.2 74,0.8 76,3.2 78,0.8 80,3.2 82,0.8 84,3.2 86,0.8 88,3.2 90,0.8 92,3.2 94,0.8 96,3.2 98,0.8 100,3.2 102,0.8 104,3.2" fill="none" stroke="#d0a53c" stroke-width="1.1"/></svg><svg style="left:550px;top:336px" width="12" height="17" viewBox="0 0 12 17"><path d="M6 1C3.2 1 1.1 3.1 1.1 5.8C1.1 7.6 2.1 9 3.3 9.9V12H8.7V9.9C9.9 9 10.9 7.6 10.9 5.8C10.9 3.1 8.8 1 6 1Z" fill="#f2c55c"/><path d="M3.8 13.6H8.2M4 15.6H8" stroke="#dfe1e5" stroke-width="1.2"/></svg><div class="ln" style="left:474px;top:115.5px;">1</div><div class="cl" style="left:542px;top:115.0px">apply <span class="s">plugin</span>: <span class="s">'com.android.application'</span></div><div class="ln" style="left:474px;top:137.5px;">2</div><div class="cl" style="left:542px;top:137.0px"></div><div class="ln" style="left:474px;top:159.5px;">3</div><div class="cl" style="left:542px;top:159.0px">android {</div><div class="ln" style="left:474px;top:181.5px;">4</div><div class="cl" style="left:542px;top:181.0px">    compileSdkVersion <span class="n">35</span></div><div class="ln" style="left:474px;top:203.5px;">5</div><div class="cl" style="left:542px;top:203.0px">    buildToolsVersion <span class="s">'35.0.0'</span></div><div class="ln" style="left:474px;top:225.5px;">6</div><div class="cl" style="left:542px;top:225.0px">    namespace <span class="s">'     v'</span></div><div class="ln" style="left:474px;top:247.5px;">7</div><div class="cl" style="left:542px;top:247.0px">    defaultConfig {</div><div class="abs" style="left:694px;top:247px;width:136px;height:20px;border-radius:4px;background:#2b2d30"></div><div class="t" style="left:701.5px;top:248.50px;font-size:13px;color:#868a91;font-weight:normal;letter-spacing:0.610px;">DefaultConfig it -&gt;</div><div class="ln" style="left:474px;top:269.5px;">8</div><div class="cl" style="left:542px;top:269.0px">        applicationId <span class="s">"     v"</span></div><div class="ln" style="left:474px;top:291.5px;">9</div><div class="cl" style="left:542px;top:291.0px">        minSdkVersion <span class="n">21</span></div><div class="ln" style="left:474px;top:313.5px;">10</div><div class="cl" style="left:542px;top:313.0px">        targetSdkVersion <span class="n">33</span></div><div class="ln" style="left:474px;top:335.5px;color:#a1a3ab">11</div><div class="cl" style="left:542px;top:335.0px">        versionCode <span class="n">1</span></div><div class="ln" style="left:474px;top:357.5px;">12</div><div class="cl" style="left:542px;top:357.0px">        versionName <span class="s">"1.0"</span></div><div class="ln" style="left:474px;top:379.5px;">13</div><div class="cl" style="left:542px;top:379.0px">        multiDexEnabled <span class="k">true</span></div><div class="ln" style="left:474px;top:401.5px;">14</div><div class="cl" style="left:542px;top:401.0px">        compileOptions {</div><div class="abs" style="left:734px;top:401px;width:148px;height:20px;border-radius:4px;background:#2b2d30"></div><div class="t" style="left:741px;top:402.50px;font-size:13px;color:#868a91;font-weight:normal;letter-spacing:0.574px;">CompileOptions it -&gt;</div><div class="ln" style="left:474px;top:423.5px;">15</div><div class="cl" style="left:542px;top:423.0px">            sourceCompatibility JavaVersion.<span class="p">VERSION_1_8</span></div><div class="ln" style="left:474px;top:445.5px;">16</div><div class="cl" style="left:542px;top:445.0px">            targetCompatibility JavaVersion.<span class="p">VERSION_1_8</span></div><div class="ln" style="left:474px;top:467.5px;">17</div><div class="cl" style="left:542px;top:467.0px">        }</div><div class="ln" style="left:474px;top:489.5px;">18</div><div class="cl" style="left:542px;top:489.0px">        ndk {</div><div class="ln" style="left:474px;top:511.5px;">19</div><div class="cl" style="left:542px;top:511.0px">            abiFilters <span class="s">'armeabi-v7a'</span> <span class="cm">// </span><span class="cm" style="font-size:13.2px;letter-spacing:-0.4px">配置的越少包的的体积越小</span></div><div class="ln" style="left:474px;top:533.5px;">20</div><div class="cl" style="left:542px;top:533.0px">        }</div><div class="ln" style="left:474px;top:555.5px;">21</div><div class="cl" style="left:542px;top:555.0px">    }</div><div class="ln" style="left:474px;top:577.5px;">22</div><div class="cl" style="left:542px;top:577.0px"></div><div class="ln" style="left:474px;top:599.5px;">23</div><div class="cl" style="left:542px;top:599.0px"></div><div class="ln" style="left:474px;top:621.5px;">24</div><div class="cl" style="left:542px;top:621.0px">    signingConfigs {</div><div class="abs" style="left:702px;top:621px;width:350px;height:20px;border-radius:4px;background:#2b2d30"></div><div class="t" style="left:709px;top:622.50px;font-size:13px;color:#868a91;font-weight:normal;letter-spacing:0.608px;">NamedDomainObjectContainer&lt;SigningConfig&gt; it -&gt;</div><div class="ln" style="left:474px;top:643.5px;">25</div><div class="cl" style="left:542px;top:643.0px">        <span class="s">config</span> {</div><div class="ln" style="left:474px;top:665.5px;">26</div><div class="cl" style="left:542px;top:665.0px">            keyAlias <span class="s">'key0'</span></div><div class="ln" style="left:474px;top:687.5px;">27</div><div class="cl" style="left:542px;top:687.0px">            keyPassword <span class="s">'123456'</span></div><div class="ln" style="left:474px;top:709.5px;">28</div><div class="cl" style="left:542px;top:709.0px">            storeFile file(<span class="s">'test.jks'</span>)</div><div class="ln" style="left:474px;top:731.5px;">29</div><div class="cl" style="left:542px;top:731.0px">            storePassword <span class="s">'123456'</span></div><div class="ln" style="left:474px;top:753.5px;">30</div><div class="cl" style="left:542px;top:753.0px">            v1SigningEnabled <span class="k">true</span></div><div class="ln" style="left:474px;top:775.5px;">31</div><div class="cl" style="left:542px;top:775.0px">            v2SigningEnabled <span class="k">true</span></div><div class="ln" style="left:474px;top:797.5px;">32</div><div class="cl" style="left:542px;top:797.0px">        }</div><div class="ln" style="left:474px;top:819.5px;">33</div><div class="cl" style="left:542px;top:819.0px">    }</div><div class="ln" style="left:474px;top:841.5px;">34</div><div class="cl" style="left:542px;top:841.0px"></div><div class="ln" style="left:474px;top:863.5px;">35</div><div class="cl" style="left:542px;top:863.0px">    buildTypes {</div><div class="abs" style="left:670px;top:863px;width:321px;height:20px;border-radius:4px;background:#2b2d30"></div><div class="t" style="left:676.5px;top:864.50px;font-size:13px;color:#868a91;font-weight:normal;letter-spacing:0.568px;">NamedDomainObjectContainer&lt;BuildType&gt; it -&gt;</div><div class="ln" style="left:474px;top:885.5px;">36</div><div class="cl" style="left:542px;top:885.0px">        <span class="s">debug</span> {</div><div class="ln" style="left:474px;top:907.5px;">37</div><div class="cl" style="left:542px;top:907.0px">            signingConfig signingConfigs.config</div><div class="ln" style="left:474px;top:929.5px;">38</div><div class="cl" style="left:542px;top:929.0px">            minifyEnabled <span class="k">false</span></div><div class="ln" style="left:474px;top:951.5px;">39</div><div class="cl" style="left:542px;top:951.0px">            proguardFiles getDefaultProguardFile(<span class="s">'proguard-android-optimize.txt'</span>), <span class="s">'proguard-rules.pro'</span></div><div class="ln" style="left:474px;top:973.5px;">40</div><div class="cl" style="left:542px;top:973.0px">        }</div><div class="ln" style="left:474px;top:995.5px;">41</div><div class="cl" style="left:542px;top:995.0px">        <span class="s">release</span> {</div><div class="ln" style="left:474px;top:1017.5px;">42</div><div class="cl" style="left:542px;top:1017.0px">            signingConfig signingConfigs.config</div><div class="ln" style="left:474px;top:1039.5px;">43</div><div class="cl" style="left:542px;top:1039.0px">            minifyEnabled <span class="k">false</span></div><div class="ln" style="left:474px;top:1061.5px;">44</div><div class="cl" style="left:542px;top:1061.0px">            proguardFiles getDefaultProguardFile(<span class="s">'proguard-android-optimize.txt'</span>), <span class="s">'proguard-rules.pro'</span></div><div class="ln" style="left:474px;top:1083.5px;">45</div><div class="cl" style="left:542px;top:1083.0px">        }</div><div class="ln" style="left:474px;top:1105.5px;">46</div><div class="cl" style="left:542px;top:1105.0px">    }</div><div class="ln" style="left:474px;top:1127.5px;">47</div><div class="cl" style="left:542px;top:1127.0px">    packaging {</div><div class="abs" style="left:662px;top:1127px;width:112px;height:20px;border-radius:4px;background:#2b2d30"></div><div class="t" style="left:669.5px;top:1128.50px;font-size:13px;color:#868a91;font-weight:normal;letter-spacing:0.410px;">Packaging it -&gt;</div><div class="ln" style="left:474px;top:1149.5px;">48</div><div class="cl" style="left:542px;top:1149.0px">        jniLibs {</div><div class="abs" style="left:678px;top:1149px;width:153px;height:20px;border-radius:4px;background:#2b2d30"></div><div class="t" style="left:684px;top:1150.50px;font-size:13px;color:#868a91;font-weight:normal;letter-spacing:0.326px;">JniLibsPackaging it -&gt;</div>
</body></html>
